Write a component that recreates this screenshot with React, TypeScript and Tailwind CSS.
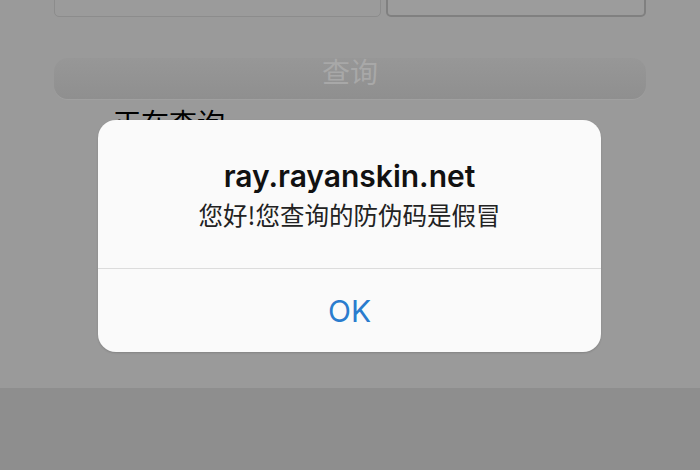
import React from "react";

export default function App() {
  return (
    <div
      className="relative w-[700px] h-[470px] overflow-hidden bg-[#9a9a9a] flex flex-col"
      style={{ fontFamily: '"Inter", "Noto Sans CJK SC", sans-serif' }}
    >
      <div className="flex-1 px-[54px]">
        <div className="flex gap-[5px] -mt-[33px]">
          <div className="w-[327px] h-[50px] rounded-[5px] border border-[#8c8c8c] bg-[#9b9b9b]" />
          <div className="flex-1 h-[50px] rounded-[5px] border-2 border-[#808080] bg-[#9c9c9c]" />
        </div>
        <div className="mt-[41px] h-[41px] rounded-[14px] bg-gradient-to-b from-[#979797] to-[#8f8f8f] flex items-center justify-center pb-[16px] shadow-[0_1px_0_#a0a0a0]">
          <span
            className="text-[28px] leading-[28px] text-[#a8a8a8]"
            style={{ fontFamily: '"Noto Sans CJK SC", sans-serif' }}
          >
            查询
          </span>
        </div>
        <div
          className="mt-[9px] pl-[59px] text-[28px] leading-[28px] text-black"
          style={{ fontFamily: '"Noto Sans CJK SC", sans-serif' }}
        >
          正在查询
        </div>
      </div>
      <div className="h-[82px] bg-[#8e8e8e]" />

      <div className="absolute left-[98px] top-[120px] w-[503px] h-[232px] rounded-[18px] bg-[#fafafa] flex flex-col overflow-hidden shadow-[0_1px_2px_rgba(0,0,0,0.15)]">
        <div className="h-[149px] border-b border-[#dcdcdc] flex flex-col items-center pt-[38px]">
          <div className="text-[30px] leading-[36px] font-semibold text-[#111111]">
            ray.rayanskin.net
          </div>
          <div
            className="mt-[5px] text-[24.5px] leading-[32px] text-[#222222]"
            style={{ fontFamily: '"Noto Sans CJK SC", sans-serif' }}
          >
            您好!您查询的防伪码是假冒
          </div>
        </div>
        <div className="flex-1 flex items-center justify-center">
          <span className="text-[30px] leading-[36px] text-[#2a7cce]">OK</span>
        </div>
      </div>
    </div>
  );
}
